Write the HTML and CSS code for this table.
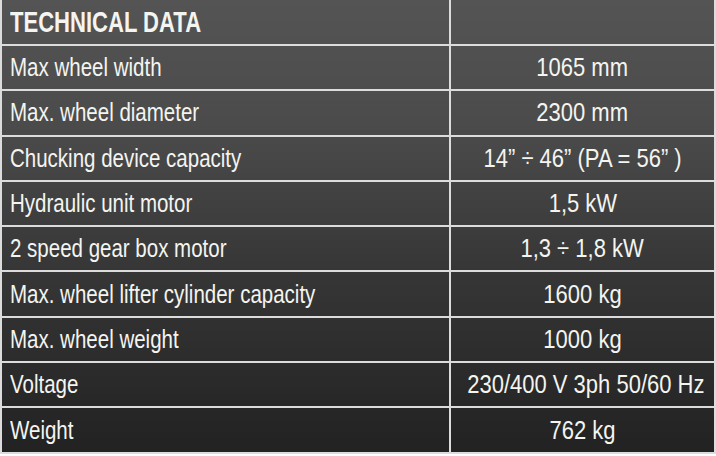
FILE: index.html
```html
<!DOCTYPE html>
<html lang="en">

<head>
	<meta charset="UTF-8">
	<title>Technical data</title>
	<link rel="stylesheet" href="styles.css">
</head>

<body>
	<table class="spec-table">
		<tr class="spec-head">
			<th><span>TECHNICAL DATA</span></th>
			<th></th>
		</tr>
		<tr>
			<td><span>Max wheel width</span></td>
			<td><span>1065 mm</span></td>
		</tr>
		<tr>
			<td><span>Max. wheel diameter</span></td>
			<td><span>2300 mm</span></td>
		</tr>
		<tr>
			<td><span>Chucking device capacity</span></td>
			<td><span>14” ÷ 46” (PA = 56” )</span></td>
		</tr>
		<tr>
			<td><span>Hydraulic unit motor</span></td>
			<td><span>1,5 kW</span></td>
		</tr>
		<tr>
			<td><span>2 speed gear box motor</span></td>
			<td><span>1,3 ÷ 1,8 kW</span></td>
		</tr>
		<tr>
			<td><span>Max. wheel lifter cylinder capacity</span></td>
			<td><span>1600 kg</span></td>
		</tr>
		<tr>
			<td><span>Max. wheel weight</span></td>
			<td><span>1000 kg</span></td>
		</tr>
		<tr>
			<td><span>Voltage</span></td>
			<td><span>230/400 V 3ph 50/60 Hz</span></td>
		</tr>
		<tr>
			<td><span>Weight</span></td>
			<td><span>762 kg</span></td>
		</tr>
	</table>
</body>

</html>
```

FILE: styles.css
```css
* {
	margin: 0;
	padding: 0;
	box-sizing: border-box;
}

body {
	background: #fff;
	font-family: "Liberation Sans", Arial, sans-serif;
	color: #f4f4f0;
}

.spec-table {
	width: 716px;
	border-collapse: collapse;
	table-layout: fixed;
	background: linear-gradient(to bottom, #545454 0%, #4a4a4a 30%, #363636 60%, #222 100%);
}

.spec-table th,
.spec-table td {
	height: 45.3px;
	padding: 0 8px;
	border: 2px solid #dcdcdc;
	font-size: 25px;
	font-weight: normal;
	text-align: left;
	vertical-align: middle;
	white-space: nowrap;
}

/* condensed look: no narrow font installed, so squeeze the glyphs */
.spec-table span {
	display: inline-block;
	transform: scaleX(0.82);
	transform-origin: left center;
}

.spec-table td:last-child {
	text-align: center;
	padding: 0;
}

.spec-table td:last-child span {
	transform: scaleX(0.88);
	transform-origin: center center;
}

.spec-table th:first-child,
.spec-table td:first-child {
	width: 449px;
}

.spec-head th {
	height: 45px;
	border-top: 0;
	font-size: 30px;
	font-weight: bold;
}

.spec-head span {
	transform: scaleX(0.735);
}
```
